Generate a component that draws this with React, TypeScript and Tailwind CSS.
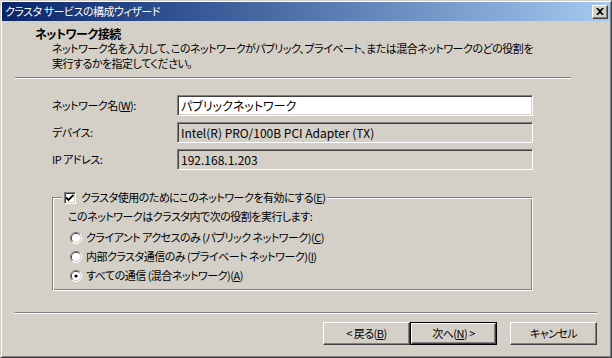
import React from "react";

const font = "font-['Noto_Sans_CJK_JP',sans-serif] [font-feature-settings:'palt']";

function Field({ value, white }: { value: string; white?: boolean }) {
  return (
    <div
      className={`h-[21px] w-[356px] flex items-center px-[3px] border border-t-[#808080] border-l-[#808080] border-r-white border-b-white shadow-[inset_1px_1px_0_#404040,inset_-1px_-1px_0_#d4d0c8] ${
        white ? "bg-white" : "bg-[#d4d0c8]"
      }`}
    >
      <span className="leading-none text-[12px] tracking-normal">{value}</span>
    </div>
  );
}

function Radio({ checked }: { checked?: boolean }) {
  return (
    <svg width="12" height="12" viewBox="0 0 12 12" className="shrink-0">
      <path d="M10 2 A5.5 5.5 0 0 0 2 10" fill="none" stroke="#808080" strokeWidth="1" />
      <path d="M9.2 2.8 A4.5 4.5 0 0 0 2.8 9.2" fill="none" stroke="#404040" strokeWidth="1" />
      <path d="M2 10 A5.5 5.5 0 0 0 10 2" fill="none" stroke="#ffffff" strokeWidth="1" />
      <path d="M2.8 9.2 A4.5 4.5 0 0 0 9.2 2.8" fill="none" stroke="#d4d0c8" strokeWidth="1" />
      <circle cx="6" cy="6" r="4" fill="#ffffff" />
      {checked && <circle cx="6" cy="6" r="1.6" fill="#000000" />}
    </svg>
  );
}

function Button({ children, primary }: { children: React.ReactNode; primary?: boolean }) {
  const inner = (
    <div className="h-full w-full flex items-center justify-center border border-t-white border-l-white border-r-[#404040] border-b-[#404040] shadow-[inset_-1px_-1px_0_#808080]">
      {children}
    </div>
  );
  return primary ? (
    <div className="h-[23px] w-[87px] border border-black">{inner}</div>
  ) : (
    <div className="h-[23px] w-[87px]">{inner}</div>
  );
}

export default function App() {
  return (
    <div
      className={`w-[612px] h-[358px] bg-[#d4d0c8] text-black text-[11px] tracking-[-0.5px] leading-[15px] ${font} border border-t-[#d4d0c8] border-l-[#d4d0c8] border-r-[#404040] border-b-[#404040] p-[1px] shadow-[inset_1px_1px_0_#ffffff,inset_-1px_-1px_0_#808080] flex flex-col`}
    >
      {/* title bar */}
      <div className="h-[19px] shrink-0 flex items-center justify-between pl-[3px] pr-[2px] bg-linear-to-r from-[#0a246a] to-[#a6caf0]">
        <span className="text-white text-[11px] leading-none">クラスタ サービスの構成ウィザード</span>
        <div className="w-[16px] h-[14px] bg-[#d4d0c8] flex items-center justify-center border border-t-white border-l-white border-r-[#404040] border-b-[#404040] shadow-[inset_-1px_-1px_0_#808080]">
          <svg width="8" height="7" viewBox="0 0 8 7">
            <path d="M0 0 L2 0 L4 2 L6 0 L8 0 L5 3.5 L8 7 L6 7 L4 5 L2 7 L0 7 L3 3.5 Z" fill="#000" />
          </svg>
        </div>
      </div>

      {/* header */}
      <div className="mt-[5px] ml-[33px] font-bold text-[12px]">ネットワーク接続</div>
      <div className="ml-[50px]">
        <div>ネットワーク名を入力して、このネットワークがパブリック、プライベート、または混合ネットワークのどの役割を</div>
        <div>実行するかを指定してください。</div>
      </div>
      <div className="mt-[6px] ml-[13px] w-[556px] border-t border-t-[#808080] border-b border-b-white" />

      {/* fields */}
      <div className="mt-[16px] ml-[50px] flex flex-col gap-[6px]">
        <div className="flex items-center">
          <span className="w-[125px]">
            ネットワーク名(<u>W</u>):
          </span>
          <Field value="パブリックネットワーク" white />
        </div>
        <div className="flex items-center">
          <span className="w-[125px]">デバイス:</span>
          <Field value="Intel(R) PRO/100B PCI Adapter (TX)" />
        </div>
        <div className="flex items-center">
          <span className="w-[125px]">IP アドレス:</span>
          <Field value="192.168.1.203" />
        </div>
      </div>

      {/* group */}
      <div className="mt-[27px] ml-[50px] w-[481px] h-[94px] relative border border-t-[#808080] border-l-[#808080] border-r-white border-b-white shadow-[inset_1px_1px_0_#ffffff,inset_-1px_-1px_0_#808080] pt-[9px] pl-[15px]">
        <div className="absolute -top-[8px] left-[9px] bg-[#d4d0c8] flex items-center gap-[5px] px-[2px]">
          <div className="w-[12px] h-[12px] bg-white border border-t-[#808080] border-l-[#808080] border-r-white border-b-white shadow-[inset_1px_1px_0_#404040,inset_-1px_-1px_0_#d4d0c8] flex items-center justify-center">
            <svg width="8" height="8" viewBox="0 0 8 8">
              <path d="M0 3.5 L2.5 6 L7.5 1" fill="none" stroke="#000" strokeWidth="1.8" />
            </svg>
          </div>
          <span>
            クラスタ使用のためにこのネットワークを有効にする(<u>E</u>)
          </span>
        </div>
        <div className="h-[19px] flex items-center">このネットワークはクラスタ内で次の役割を実行します:</div>
        <div className="mt-[2px] flex flex-col">
          <div className="h-[19px] flex items-center gap-[4px] pl-[2px]">
            <Radio />
            <span>
              クライアント アクセスのみ (パブリック ネットワーク)(<u>C</u>)
            </span>
          </div>
          <div className="h-[19px] flex items-center gap-[4px] pl-[2px]">
            <Radio />
            <span>
              内部クラスタ通信のみ (プライベート ネットワーク)(<u>I</u>)
            </span>
          </div>
          <div className="h-[19px] flex items-center gap-[4px] pl-[2px]">
            <Radio checked />
            <span>
              すべての通信 (混合ネットワーク)(<u>A</u>)
            </span>
          </div>
        </div>
      </div>

      {/* footer */}
      <div className="mt-[21px] ml-[13px] w-[582px] border-t border-t-[#808080] border-b border-b-white" />
      <div className="mt-[8px] flex justify-end pr-[13px]">
        <Button>
          &lt; 戻る(<u>B</u>)
        </Button>
        <Button primary>
          次へ(<u>N</u>) &gt;
        </Button>
        <div className="w-[13px]" />
        <Button>キャンセル</Button>
      </div>
    </div>
  );
}
